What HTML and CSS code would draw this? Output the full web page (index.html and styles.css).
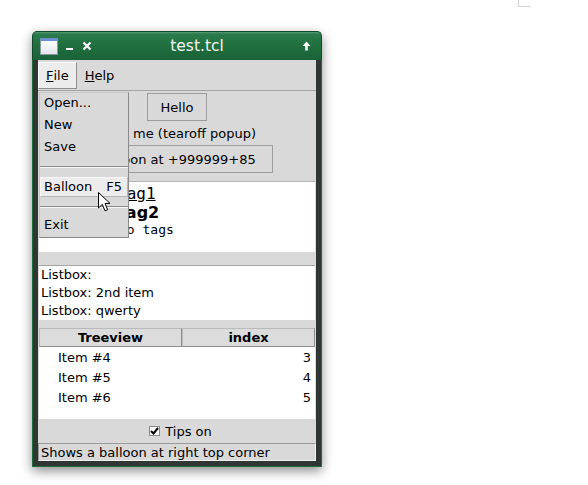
FILE: index.html
```html
<!DOCTYPE html>
<html>
<head>
<meta charset="utf-8">
<link rel="stylesheet" href="styles.css">
</head>
<body>
<div class="corner"></div>
<div class="window">
  <div class="titlebar">
    <div class="tb-left">
      <span class="app-icon"></span>
      <svg class="tb-btn" width="8" height="10" viewBox="0 0 8 10"><rect x="0" y="7" width="7" height="2" fill="#fff"/></svg>
      <svg class="tb-btn tb-close" width="10" height="10" viewBox="0 0 10 10"><path d="M1.5 1.5 L8.5 8.5 M8.5 1.5 L1.5 8.5" stroke="#fff" stroke-width="2.2"/></svg>
    </div>
    <div class="tb-title">test.tcl</div>
    <div class="tb-right">
      <svg width="9" height="10" viewBox="0 0 9 10"><path d="M4.5 0.5 L8.5 5 L5.8 5 L5.8 9.5 L3.2 9.5 L3.2 5 L0.5 5 Z" fill="#fff"/></svg>
    </div>
  </div>
  <div class="frame">
    <div class="client">
      <div class="menubar">
        <span class="mb-item mb-active"><u>F</u>ile</span>
        <span class="mb-item"><u>H</u>elp</span>
      </div>
      <div class="content">
        <div class="btn-row btn-row-top"><span class="btn btn-hello">Hello</span></div>
        <div class="label">Click me (tearoff popup)</div>
        <div class="btn-row"><span class="btn">Balloon at +999999+85</span></div>
        <div class="textw">
          <div class="tl tl-1"><span class="tag1">Tag1</span></div>
          <div class="tl tl-2"><span class="tag2">Tag2</span></div>
          <div class="tl tl-3">No tags</div>
        </div>
        <div class="listbox">
          <div class="lb-item">Listbox:</div>
          <div class="lb-item">Listbox: 2nd item</div>
          <div class="lb-item">Listbox: qwerty</div>
        </div>
        <div class="tree">
          <div class="tree-head">
            <div class="th th-name">Treeview</div>
            <div class="th th-idx">index</div>
          </div>
          <div class="tree-body">
            <div class="tr"><span class="td-name">Item #4</span><span class="td-idx">3</span></div>
            <div class="tr"><span class="td-name">Item #5</span><span class="td-idx">4</span></div>
            <div class="tr"><span class="td-name">Item #6</span><span class="td-idx">5</span></div>
          </div>
        </div>
        <div class="tips">
          <span class="check"><svg width="9" height="8" viewBox="0 0 9 8"><path d="M1 4 L3.5 6.5 L8 1" stroke="#000" stroke-width="2" fill="none"/></svg></span>
          <span>Tips on</span>
        </div>
        <div class="status">Shows a balloon at right top corner</div>
      </div>
      <div class="dropdown">
        <div class="dd-item">Open...</div>
        <div class="dd-item">New</div>
        <div class="dd-item">Save</div>
        <div class="dd-sep"></div>
        <div class="dd-item dd-active"><span>Balloon</span><span>F5</span></div>
        <div class="dd-sep"></div>
        <div class="dd-item">Exit</div>
      </div>
    </div>
  </div>
</div>
<svg class="pointer" width="13" height="21" viewBox="0 0 13 21"><path d="M0.5 0.5 L0.5 16 L4.3 12.3 L7 18.8 L9.6 17.7 L7 11.4 L12 11.4 Z" fill="#fff" stroke="#000" stroke-width="1" stroke-linejoin="miter"/></svg>
</body>
</html>
```
FILE: styles.css
```css
html, body {
  margin: 0;
  padding: 0;
  background: #ffffff;
  width: 588px;
  height: 485px;
  overflow: hidden;
  font-family: "DejaVu Sans", sans-serif;
  font-size: 13px;
  color: #000;
}
.corner {
  position: absolute;
  left: 518px;
  top: 0;
  width: 12px;
  height: 6px;
  border-left: 1px solid #d4d4d4;
  border-bottom: 1px solid #d4d4d4;
}
.window {
  margin: 31px 0 0 32px;
  width: 290px;
  border-radius: 5px 5px 0 0;
  box-shadow: 0 4px 12px rgba(0,0,0,0.45);
}
.titlebar {
  height: 29px;
  box-sizing: border-box;
  display: flex;
  align-items: center;
  padding: 0 10px 0 7px;
  border-radius: 5px 5px 0 0;
  border: 1px solid #124a2a;
  border-bottom: none;
  background: linear-gradient(to bottom, #5a9e76 0, #2c7b4e 2px, #21703f 45%, #1a6238 100%);
  color: #fff;
}
.tb-left {
  display: flex;
  align-items: center;
}
.app-icon {
  width: 16px;
  height: 13px;
  background: linear-gradient(#fdfdfd, #e4e6ea);
  border: 1px solid #8d97a3;
  border-top: 3px solid #6a8ecf;
  margin-top: 1px;
}
.tb-btn { margin-left: 8px; }
.tb-close { margin-left: 8px; }
.tb-title {
  flex: 1;
  text-align: center;
  font-size: 15.5px;
  color: #f2f6f3;
  margin-top: -1px;
}
.tb-right {
  display: flex;
  align-items: center;
}
.frame {
  background: #2f3633;
  border: 1px solid #1d6a3d;
  border-top: none;
  padding: 0 5px 5px 5px;
}
.client {
  position: relative;
  background: #d9d9d9;
  width: 278px;
}
.menubar {
  height: 31px;
  display: flex;
  align-items: stretch;
  padding: 2px 0 1px 0;
  box-sizing: border-box;
  border-bottom: 1px solid #a3a3a3;
}
.mb-item {
  display: flex;
  align-items: center;
  padding: 0 7px 0 7px;
  border: 1px solid transparent;
}
.mb-active {
  background: #ececec;
  border-color: #fafafa #8e8e8e #8e8e8e #fafafa;
}
.content {
  display: flex;
  flex-direction: column;
}
.btn-row {
  display: flex;
  justify-content: center;
}
.btn-row-top { margin-top: 2px; }
.btn {
  height: 28px;
  box-sizing: border-box;
  display: flex;
  align-items: center;
  justify-content: center;
  padding: 0 16px;
  border: 1px solid #9c9c9c;
}
.btn-hello {
  width: 60px;
  padding: 0;
}
.label {
  height: 24px;
  display: flex;
  align-items: center;
  justify-content: center;
}
.textw {
  margin-top: 8px;
  margin-left: 1px;
  margin-right: 1px;
  height: 71px;
  box-sizing: border-box;
  background: #fff;
  border-top: 1px solid #b3b3b3;
  padding-top: 2px;
}
.tl { padding-left: 78px; }
.tl-1 { font-family: "DejaVu Sans Mono", monospace; font-size: 16px; }
.tl-2 { font-family: "DejaVu Sans", sans-serif; font-size: 16px; font-weight: bold; }
.tl-3 { font-family: "DejaVu Sans Mono", monospace; font-size: 13px; padding-left: 80px; }
.tag1 { text-decoration: underline; }
.listbox {
  margin: 13px 1px 0 1px;
  height: 55px;
  box-sizing: border-box;
  background: #fff;
  border-top: 1px solid #a3a3a3;
  padding: 0 2px;
}
.lb-item {
  height: 18px;
  line-height: 18px;
}
.tree {
  margin: 8px 1px 0 1px;
}
.tree-head {
  display: flex;
  height: 19px;
}
.th {
  box-sizing: border-box;
  display: flex;
  align-items: center;
  justify-content: center;
  font-weight: bold;
  border: 1px solid #9b9b9b;
  border-color: #b9b9b9 #8f8f8f #8f8f8f #b9b9b9;
  background: #dcdcdc;
}
.th-name { width: 143px; }
.th-idx { flex: 1; }
.tree-body {
  background: #fff;
  height: 72px;
}
.tr {
  height: 20px;
  display: flex;
  align-items: center;
  justify-content: space-between;
  padding: 0 4px 0 19px;
}
.tips {
  height: 24px;
  display: flex;
  align-items: center;
  justify-content: center;
  padding-left: 7px;
  gap: 5px;
}
.check {
  width: 9px;
  height: 8px;
  background: #fff;
  border: 1px solid #8a8a8a;
  display: flex;
}
.status {
  height: 18px;
  box-sizing: border-box;
  border: 1px solid #9a9a9a;
  border-color: #9a9a9a #f0f0f0 #f0f0f0 #9a9a9a;
  display: flex;
  align-items: center;
  padding-left: 2px;
}
.dropdown {
  position: absolute;
  left: 1px;
  top: 32px;
  width: 90px;
  box-sizing: border-box;
  background: #d9d9d9;
  border: 1px solid #9a9a9a;
  border-color: #c8c8c8 #8a8a8a #8a8a8a #c8c8c8;
  padding: 0;
}
.dd-item {
  height: 22px;
  display: flex;
  align-items: center;
  justify-content: space-between;
  padding: 0 6px 4px 4px;
  box-sizing: border-box;
}
.dd-active {
  background: #ececec;
  border: 1px solid #f7f7f7;
  border-right-color: #b5b5b5;
  border-bottom-color: #b5b5b5;
  margin: 2px 0;
  height: 20px;
  padding: 0 5px 2px 3px;
}
.dd-sep {
  height: 16px;
  display: flex;
  align-items: center;
}
.dd-sep::before {
  content: "";
  display: block;
  width: 100%;
  height: 0;
  border-top: 1px solid #8c8c8c;
  border-bottom: 1px solid #f5f5f5;
}
.pointer {
  position: absolute;
  left: 98px;
  top: 192px;
}
```
